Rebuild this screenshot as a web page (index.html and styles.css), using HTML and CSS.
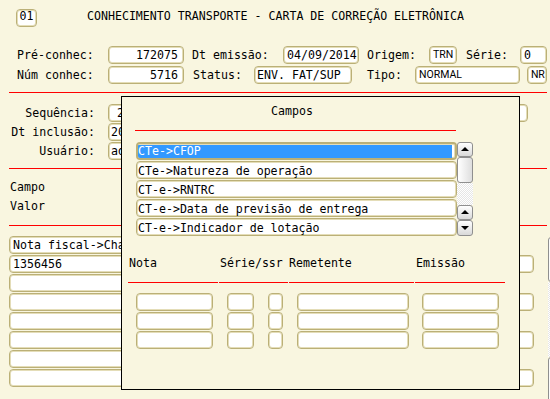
FILE: index.html
```html
<!DOCTYPE html>
<html lang="pt">
<head>
<meta charset="utf-8">
<title>Carta de correção eletrônica</title>
<link rel="stylesheet" href="styles.css">
</head>
<body>
<div class="screen">
  <div class="title-row">
    <span class="num-box">01</span>
    <span class="title">CONHECIMENTO TRANSPORTE - CARTA DE CORREÇÃO ELETRÔNICA</span>
  </div>

  <div class="row row-1">
    <span class="lbl lbl-pre">Pré-conhec:</span>
    <span class="fld f-num">172075</span>
    <span class="lbl lbl-dt">Dt emissão:</span>
    <span class="fld f-date">04/09/2014</span>
    <span class="lbl lbl-orig">Origem:</span>
    <span class="fld f-orig sans">TRN</span>
    <span class="lbl lbl-serie">Série:</span>
    <span class="fld f-serie">0</span>
  </div>

  <div class="row row-2">
    <span class="lbl lbl-pre">Núm conhec:</span>
    <span class="fld f-num">5716</span>
    <span class="lbl lbl-status">Status:</span>
    <span class="fld f-status">ENV. FAT/SUP</span>
    <span class="lbl lbl-tipo">Tipo:</span>
    <span class="fld f-tipo sans">NORMAL</span>
    <span class="fld f-nr sans">NR</span>
  </div>

  <div class="rule rule-1"></div>

  <div class="row row-3">
    <span class="lbl lbl-right">Sequência:</span>
    <span class="fld f-seq">2</span>
  </div>
  <div class="row row-4">
    <span class="lbl lbl-right">Dt inclusão:</span>
    <span class="fld f-short">20</span>
  </div>
  <div class="row row-5">
    <span class="lbl lbl-right">Usuário:</span>
    <span class="fld f-short">ad</span>
  </div>

  <div class="rule rule-2"></div>

  <div class="row row-campo"><span class="lbl">Campo</span></div>
  <div class="row row-valor"><span class="lbl">Valor</span></div>

  <div class="rule rule-3"></div>

  <div class="values">
    <div class="value-list">
      <span class="fld vrow short">Nota fiscal-&gt;Cha</span>
      <span class="fld vrow">1356456</span>
      <span class="fld vrow short"></span>
      <span class="fld vrow"></span>
      <span class="fld vrow short"></span>
      <span class="fld vrow"></span>
      <span class="fld vrow short"></span>
      <span class="fld vrow"></span>
    </div>
    <div class="vscroll">
      <div class="vs-thumb"></div>
      <div class="vs-track"></div>
      <div class="vs-btn"></div>
    </div>
  </div>

  <div class="popup">
    <div class="pop-title">Campos</div>
    <div class="pop-rule"></div>
    <div class="pop-list">
      <div class="items">
        <div class="item selected"><span>CTe-&gt;CFOP</span></div>
        <div class="item"><span>CTe-&gt;Natureza de operação</span></div>
        <div class="item"><span>CT-e-&gt;RNTRC</span></div>
        <div class="item"><span>CT-e-&gt;Data de previsão de entrega</span></div>
        <div class="item"><span>CT-e-&gt;Indicador de lotação</span></div>
      </div>
      <div class="sbar">
        <div class="sb-btn up"></div>
        <div class="sb-thumb"></div>
        <div class="sb-track"></div>
        <div class="sb-btn up"></div>
        <div class="sb-btn down"></div>
      </div>
    </div>

    <div class="pop-head">
      <span class="ph ph-nota">Nota</span>
      <span class="ph ph-serie">Série/ssr</span>
      <span class="ph ph-rem">Remetente</span>
      <span class="ph">Emissão</span>
    </div>
    <div class="pop-lines">
      <span class="pl pl-1"></span>
      <span class="pl pl-2"></span>
      <span class="pl pl-3"></span>
      <span class="pl pl-4"></span>
    </div>
    <div class="pop-grid">
      <div class="grow"><span class="fld c1"></span><span class="fld c2"></span><span class="fld c3"></span><span class="fld c4"></span><span class="fld c5"></span></div>
      <div class="grow"><span class="fld c1"></span><span class="fld c2"></span><span class="fld c3"></span><span class="fld c4"></span><span class="fld c5"></span></div>
      <div class="grow"><span class="fld c1"></span><span class="fld c2"></span><span class="fld c3"></span><span class="fld c4"></span><span class="fld c5"></span></div>
    </div>
  </div>
</div>
</body>
</html>
```

FILE: styles.css
```css
* { box-sizing: border-box; }

body {
  margin: 0;
  background: #f9f6e0;
  font-family: "DejaVu Sans Mono", monospace;
  font-size: 11.6px;
  color: #000;
}

.screen {
  position: relative;
  width: 550px;
  height: 399px;
  overflow: hidden;
}

/* generic field */
.fld {
  display: block;
  flex: none;
  height: 18px;
  border: 1px solid #bbb077;
  border-radius: 4px;
  box-shadow: inset 0 0 0 1px #e4ddb8;
  background: #fff;
  line-height: 16px;
  padding: 0 3px;
  white-space: pre;
  overflow: hidden;
}

.sans {
  font-family: Roboto, "Liberation Sans", sans-serif;
  font-size: 10.5px;
}

.lbl {
  flex: none;
  white-space: pre;
  line-height: 18px;
}

/* title */
.title-row {
  display: flex;
  align-items: flex-start;
  margin-top: 9px;
  padding-left: 16px;
  height: 18px;
}
.num-box {
  width: 21px;
  height: 18px;
  border: 1px solid #bbb077;
  border-radius: 4px;
  box-shadow: inset 0 0 0 1px #e4ddb8;
  background: #fff;
  line-height: 13px;
  text-align: center;
}
.title {
  margin-left: 50px;
  line-height: 15px;
  white-space: pre;
}

/* form rows */
.row {
  display: flex;
  align-items: flex-start;
  height: 18px;
}
.row-1 { margin-top: 19px; padding-left: 17px; }
.row-2 { margin-top: 2px; padding-left: 17px; }
.row-3 { margin-top: 11px; }
.row-4, .row-5 { margin-top: 1px; }
.row-campo { margin-top: 9px; padding-left: 10px; }
.row-valor { margin-top: 1px; padding-left: 10px; }

.lbl-pre { width: 91px; }
.f-num { width: 76px; text-align: right; padding-right: 5px; }
.lbl-dt { margin-left: 8px; width: 91px; }
.f-date { width: 76px; }
.lbl-orig { margin-left: 8px; width: 62px; }
.f-orig { width: 28px; }
.lbl-serie { margin-left: 9px; width: 54px; }
.f-serie { width: 27px; }

.lbl-status { margin-left: 9px; width: 61px; }
.f-status { width: 98px; padding-left: 2px; }
.lbl-tipo { margin-left: 15px; width: 48px; }
.f-tipo { width: 105px; }
.f-nr { margin-left: 7px; width: 20px; padding: 0 0 0 3px; overflow: visible; letter-spacing: -0.3px; }

.lbl-right { width: 95px; text-align: right; }
.f-seq { margin-left: 13px; width: 420px; padding-left: 8px; }
.f-short { margin-left: 13px; width: 120px; padding-left: 2px; }

/* red rules */
.rule {
  height: 1px;
  background: #ff0000;
  margin-left: 9px;
  width: 538px;
}
.rule-1 { margin-top: 8px; }
.rule-2 { margin-top: 8px; }
.rule-3 { margin-top: 10px; }

/* values list */
.values {
  display: flex;
  align-items: flex-start;
  margin-top: 10px;
  padding-left: 9px;
}
.value-list {
  display: flex;
  flex-direction: column;
  gap: 1px;
  width: 525px;
}
.vrow { width: 525px; }
.vrow.short { width: 490px; }

.vscroll {
  flex: none;
  margin-left: 14px;
  margin-top: 1px;
  width: 16px;
}
.vs-thumb {
  height: 45px;
  border: 1px solid #8f8f8f;
  border-radius: 3px;
  background: linear-gradient(to right, #fbfbfb, #dcdcdc);
}
.vs-track {
  height: 75px;
  background: repeating-conic-gradient(#e6e6e6 0 25%, #ffffff 0 50%) 0 0 / 2px 2px;
}
.vs-btn {
  height: 45px;
  border: 1px solid #8f8f8f;
  border-radius: 3px;
  background: linear-gradient(to right, #fbfbfb, #dcdcdc);
}

/* popup */
.popup {
  position: absolute;
  left: 121px;
  top: 96px;
  width: 399px;
  height: 294px;
  border: 1px solid #000;
  background: #f9f6e0;
}
.pop-title {
  margin-top: 5px;
  padding-left: 149px;
  line-height: 18px;
  height: 18px;
}
.pop-rule {
  margin-top: 10px;
  margin-left: 13px;
  width: 321px;
  height: 1px;
  background: #ff0000;
}
.pop-list {
  display: flex;
  align-items: flex-start;
  margin-top: 11px;
  margin-left: 14px;
}
.items {
  display: flex;
  flex-direction: column;
  gap: 1px;
  width: 321px;
}
.item {
  height: 18px;
  border: 1px solid #bbb077;
  border-radius: 4px;
  box-shadow: inset 0 0 0 1px #e4ddb8;
  background: #fff;
  padding: 1px 3px 1px 1px;
  white-space: pre;
  overflow: hidden;
}
.item span {
  display: block;
  height: 14px;
  line-height: 14px;
  margin-top: 1px;
}
.item.selected {
  border-width: 2px;
  padding: 1px 3px 1px 0;
}
.item.selected span {
  background: #3399ff;
  color: #fff;
  height: 13px;
  line-height: 13px;
  margin-top: 0;
}

.sbar {
  flex: none;
  width: 16px;
  display: flex;
  flex-direction: column;
}
.sb-btn {
  position: relative;
  height: 15px;
  border: 1px solid #8f8f8f;
  border-radius: 3px;
  background: linear-gradient(to bottom, #ffffff, #d9d9d9);
}
.sb-btn.down { height: 16px; }
.sb-btn::before {
  content: "";
  position: absolute;
  left: 3px;
  top: 4px;
  border-left: 4px solid transparent;
  border-right: 4px solid transparent;
}
.sb-btn.up::before { border-bottom: 4px solid #000; }
.sb-btn.down::before { border-top: 4px solid #000; top: 5px; }
.sb-thumb {
  height: 26px;
  border: 1px solid #8f8f8f;
  border-radius: 3px;
  background: linear-gradient(to right, #ffffff, #dedede);
}
.sb-track {
  height: 22px;
  background: repeating-conic-gradient(#e6e6e6 0 25%, #ffffff 0 50%) 0 0 / 2px 2px;
}

.pop-head {
  display: flex;
  margin-top: 18px;
  padding-left: 7px;
  height: 18px;
  line-height: 18px;
}
.ph { flex: none; white-space: pre; }
.ph-nota { width: 91px; }
.ph-serie { width: 69px; }
.ph-rem { width: 127px; }

.pop-lines {
  display: flex;
  gap: 1px;
  margin-top: 10px;
  margin-left: 6px;
  height: 1px;
}
.pl { display: block; height: 1px; background: #ff0000; flex: none; }
.pl-1 { width: 90px; }
.pl-2 { width: 69px; }
.pl-3 { width: 125px; }
.pl-4 { width: 90px; }

.pop-grid {
  margin-top: 10px;
  display: flex;
  flex-direction: column;
  gap: 1px;
}
.grow {
  display: flex;
  margin-left: 14px;
}
.c1 { width: 77px; }
.c2 { width: 27px; margin-left: 14px; }
.c3 { width: 15px; margin-left: 14px; }
.c4 { width: 112px; margin-left: 14px; }
.c5 { width: 77px; margin-left: 13px; }
```
